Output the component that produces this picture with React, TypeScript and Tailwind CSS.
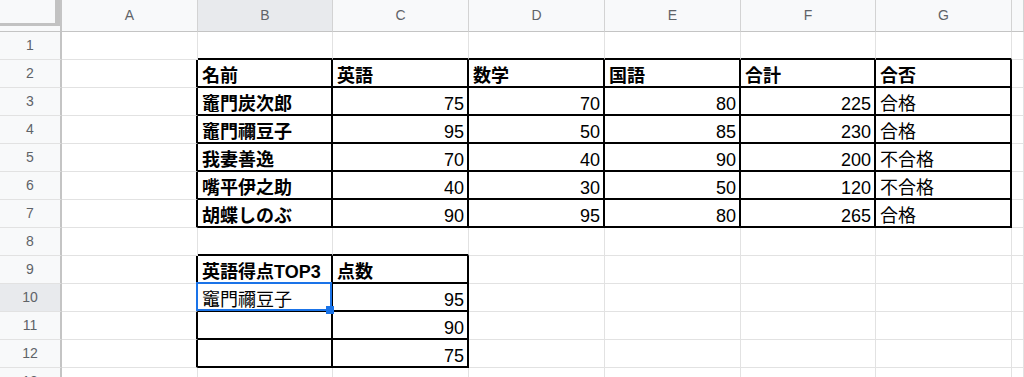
import clsx from "clsx";

type Col = { key: string; w: string };

// column widths include the cell's right border
const COLS: Col[] = [
  { key: "A", w: "w-[136px]" },
  { key: "B", w: "w-[135px]" },
  { key: "C", w: "w-[136px]" },
  { key: "D", w: "w-[136px]" },
  { key: "E", w: "w-[136px]" },
  { key: "F", w: "w-[135px]" },
  { key: "G", w: "w-[136px]" },
  { key: "", w: "w-[12px]" },
];

type CellData = { v: string; bold?: boolean; num?: boolean };

const t = (v: string, bold = false): CellData => ({ v, bold });
const n = (v: number): CellData => ({ v: String(v), num: true });

// sheet contents keyed by row number, columns start at B
const DATA: Record<number, CellData[]> = {
  2: [t("名前", true), t("英語", true), t("数学", true), t("国語", true), t("合計", true), t("合否", true)],
  3: [t("竈門炭次郎", true), n(75), n(70), n(80), n(225), t("合格")],
  4: [t("竈門禰豆子", true), n(95), n(50), n(85), n(230), t("合格")],
  5: [t("我妻善逸", true), n(70), n(40), n(90), n(200), t("不合格")],
  6: [t("嘴平伊之助", true), n(40), n(30), n(50), n(120), t("不合格")],
  7: [t("胡蝶しのぶ", true), n(90), n(95), n(80), n(265), t("合格")],
  9: [t("英語得点TOP3", true), t("点数", true)],
  10: [t("竈門禰豆子"), n(95)],
  11: [t(""), n(90)],
  12: [t(""), n(75)],
};

const ROWS = Array.from({ length: 13 }, (_, i) => i + 1);

// solid black borders around the two tables (B2:G7 and B9:C12)
function blackRight(row: number, col: number) {
  if (row >= 2 && row <= 7) return col <= 6;
  if (row >= 9 && row <= 12) return col <= 2;
  return false;
}

function blackBottom(row: number, col: number) {
  if (row >= 1 && row <= 7) return col >= 1 && col <= 6;
  if (row >= 8 && row <= 12) return col >= 1 && col <= 2;
  return false;
}

function Corner() {
  return (
    <div className="h-[32px] w-[62px] shrink-0 border-r-2 border-b border-r-[#c4c4c4] border-b-[#c4c4c4] bg-[#f8f9fa]">
      <div className="h-[26px] w-[60px] border-r-[5px] border-b-[3px] border-[#c2c2c2]" />
    </div>
  );
}

function ColumnHeader({ col }: { col: Col }) {
  return (
    <div
      className={clsx(
        "flex h-[32px] shrink-0 items-center justify-center border-r border-b border-r-[#d3d3d3] border-b-[#c4c4c4] text-[14px] text-[#5f6368]",
        col.w,
        col.key === "B" ? "bg-[#e8eaed]" : "bg-[#f8f9fa]"
      )}
    >
      {col.key}
    </div>
  );
}

function RowHeader({ row }: { row: number }) {
  return (
    <div
      className={clsx(
        "flex h-[28px] w-[62px] shrink-0 items-center justify-center border-r-2 border-b border-r-[#c4c4c4] border-b-[#e2e2e2] text-[14px] text-[#5f6368]",
        row === 10 ? "bg-[#e8eaed]" : "bg-[#f8f9fa]"
      )}
    >
      {row}
    </div>
  );
}

function SelectionBox() {
  return (
    <div className="pointer-events-none absolute -top-[2px] -left-[2px] -right-[1px] -bottom-[1px] z-10 border-2 border-[#1a73e8]">
      <div className="absolute -right-[4px] -bottom-[5px] h-[8px] w-[8px] bg-[#1a73e8]" />
    </div>
  );
}

function Cell({ row, colIndex, col }: { row: number; colIndex: number; col: Col }) {
  const data = colIndex >= 1 ? DATA[row]?.[colIndex - 1] : undefined;
  const right = blackRight(row, colIndex);
  const bottom = blackBottom(row, colIndex);
  return (
    <div
      className={clsx(
        "relative flex h-[28px] shrink-0 items-end whitespace-nowrap text-[18px] leading-[20px] text-black",
        col.w,
        right ? "border-r-2 border-r-black" : "border-r border-r-[#e2e2e2]",
        bottom ? "border-b-2 border-b-black" : "border-b border-b-[#e2e2e2]",
        data?.num ? "justify-end pr-[3px]" : "pl-[4px]",
        data?.bold && "font-bold"
      )}
    >
      {data?.v}
      {row === 10 && colIndex === 1 && <SelectionBox />}
    </div>
  );
}

export default function App() {
  return (
    <div className="h-[377px] w-[1024px] overflow-hidden bg-white font-['Liberation_Sans','Noto_Sans_CJK_JP',sans-serif]">
      <div className="flex">
        <Corner />
        {COLS.map((c) => (
          <ColumnHeader key={c.key || "end"} col={c} />
        ))}
      </div>
      {ROWS.map((r) => (
        <div key={r} className="flex">
          <RowHeader row={r} />
          {COLS.map((c, i) => (
            <Cell key={c.key || "end"} row={r} colIndex={i} col={c} />
          ))}
        </div>
      ))}
    </div>
  );
}
